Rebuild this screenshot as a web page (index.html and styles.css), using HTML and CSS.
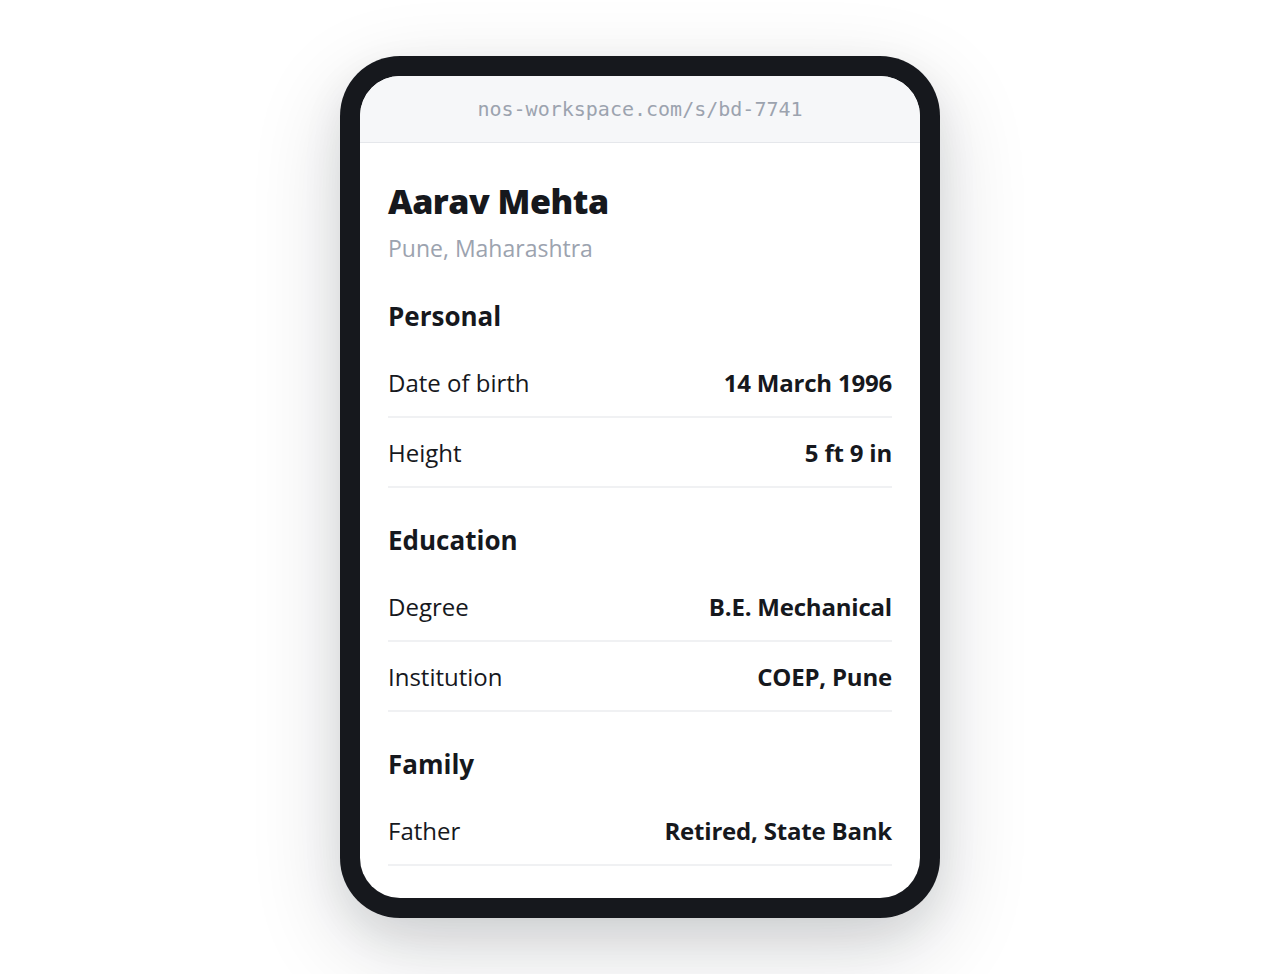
FILE: index.html
```html
<!DOCTYPE html>
<html>
<head>
<meta charset="utf-8">
<link rel="stylesheet" href="styles.css">
</head>
<body>
<div class="stage">
  <div class="phone">
    <div class="screen">
      <div class="urlbar">nos-workspace.com/s/bd-7741</div>
      <div class="content">
        <h1 class="name">Aarav Mehta</h1>
        <div class="place">Pune, Maharashtra</div>

        <h2 class="section">Personal</h2>
        <div class="row"><span class="label">Date of birth</span><span class="value">14 March 1996</span></div>
        <div class="row"><span class="label">Height</span><span class="value">5 ft 9 in</span></div>

        <h2 class="section">Education</h2>
        <div class="row"><span class="label">Degree</span><span class="value">B.E. Mechanical</span></div>
        <div class="row"><span class="label">Institution</span><span class="value">COEP, Pune</span></div>

        <h2 class="section">Family</h2>
        <div class="row"><span class="label">Father</span><span class="value">Retired, State Bank</span></div>
      </div>
    </div>
  </div>
</div>
</body>
</html>
```

FILE: styles.css
```css
html, body {
  margin: 0;
  padding: 0;
}
body {
  background: #ffffff;
  font-family: "Open Sans", "Noto Sans", sans-serif;
  color: #16181d;
}
.stage {
  width: 1280px;
  height: 974px;
  display: flex;
  justify-content: center;
  padding-top: 56px;
  box-sizing: border-box;
}
.phone {
  width: 600px;
  height: 862px;
  box-sizing: border-box;
  background: #16181d;
  border-radius: 60px;
  padding: 20px;
  box-shadow: 0 30px 90px rgba(15, 20, 30, 0.16), 0 16px 40px rgba(15, 20, 30, 0.08);
}
.screen {
  width: 100%;
  height: 100%;
  background: #ffffff;
  border-radius: 40px;
  overflow: hidden;
}
.urlbar {
  height: 66px;
  background: #f6f7f9;
  border-bottom: 1px solid #e5e7eb;
  display: flex;
  align-items: center;
  justify-content: center;
  font-family: "DejaVu Sans Mono", "Liberation Mono", monospace;
  font-size: 20px;
  color: #9ca3af;
}
.content {
  padding: 34px 28px 0;
}
.name {
  margin: 0;
  font-size: 34px;
  font-weight: 800;
  line-height: 48px;
  letter-spacing: -0.5px;
}
.place {
  font-size: 23px;
  line-height: 30px;
  color: #9ca3af;
  margin-top: 8px;
}
.section {
  margin: 0;
  font-size: 26px;
  font-weight: 700;
  line-height: 36px;
  padding-top: 34px;
  padding-bottom: 14px;
}
.place + .section {
  padding-top: 35px;
}
.row {
  display: flex;
  justify-content: space-between;
  align-items: center;
  height: 70px;
  border-bottom: 2px solid #f0f1f3;
  box-sizing: border-box;
  font-size: 24px;
}
.label {
  font-weight: 400;
}
.value {
  font-weight: 700;
  letter-spacing: -0.2px;
}
```
